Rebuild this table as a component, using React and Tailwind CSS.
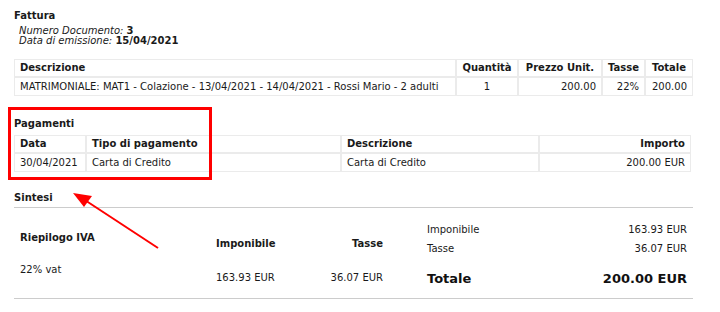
const righe = [
  { descr: 'MATRIMONIALE: MAT1 - Colazione - 13/04/2021 - 14/04/2021 - Rossi Mario - 2 adulti', qta: '1', prezzo: '200.00', tasse: '22%', totale: '200.00' },
];

const pagamenti = [
  { data: '30/04/2021', tipo: 'Carta di Credito', descr: 'Carta di Credito', importo: '200.00 EUR' },
];

const th = 'border border-[#ebebeb] px-[5px] py-[2px] font-bold leading-[12px]';
const td = 'border border-[#ebebeb] px-[5px] pt-[3px] pb-[2px] leading-[12px]';

function Freccia() {
  return (
    <svg className="absolute left-0 top-0 pointer-events-none" width="720" height="312">
      <line x1="158" y1="248" x2="84" y2="199.5" stroke="#f00" strokeWidth="2" />
      <polygon points="73,193 92,196 84,207" fill="#f00" />
    </svg>
  );
}

export default function App() {
  return (
    <div className="relative w-[720px] h-[312px] bg-white text-[#1a1a1a] text-[10px] font-['DejaVu_Sans',sans-serif] overflow-hidden">
      <div className="pl-[14px] pr-[27px] pt-[10px]">
        <div className="font-bold leading-[12px]">Fattura</div>
        <div className="pl-[5px] mt-[4px] leading-[10px]">
          <div><span className="italic">Numero Documento:</span> <b>3</b></div>
          <div><span className="italic">Data di emissione:</span> <b>15/04/2021</b></div>
        </div>

        <table className="mt-[13px] w-[679px] border-separate border-spacing-0">
          <thead>
            <tr>
              <th className={`${th} text-left`}>Descrizione</th>
              <th className={`${th} w-[62px] text-center`}>Quantità</th>
              <th className={`${th} w-[84px] text-center`}>Prezzo Unit.</th>
              <th className={`${th} w-[43px] text-center`}>Tasse</th>
              <th className={`${th} w-[48px] text-center`}>Totale</th>
            </tr>
          </thead>
          <tbody>
            {righe.map((r, i) => (
              <tr key={i}>
                <td className={td}>{r.descr}</td>
                <td className={`${td} text-center`}>{r.qta}</td>
                <td className={`${td} text-right`}>{r.prezzo}</td>
                <td className={`${td} text-right`}>{r.tasse}</td>
                <td className={`${td} text-right`}>{r.totale}</td>
              </tr>
            ))}
          </tbody>
        </table>

        <div className="mt-[22px] font-bold leading-[12px]">Pagamenti</div>
        <table className="mt-[5px] w-[677px] border-separate border-spacing-0">
          <thead>
            <tr>
              <th className={`${th} w-[72px] text-left`}>Data</th>
              <th className={`${th} w-[255px] text-left`}>Tipo di pagamento</th>
              <th className={`${th} w-[198px] text-left`}>Descrizione</th>
              <th className={`${th} text-right`}>Importo</th>
            </tr>
          </thead>
          <tbody>
            {pagamenti.map((p, i) => (
              <tr key={i}>
                <td className={td}>{p.data}</td>
                <td className={td}>{p.tipo}</td>
                <td className={td}>{p.descr}</td>
                <td className={`${td} text-right`}>{p.importo}</td>
              </tr>
            ))}
          </tbody>
        </table>

        <div className="mt-[20px] font-bold leading-[12px] pb-[3px] border-b border-[#cccccc]">Sintesi</div>

        <div className="flex h-[91px] border-b border-[#cccccc]">
          <div className="grid grid-cols-[202px_100px_67px] grid-rows-[53px_38px] w-[376px]">
            <div className="pl-[6px] pt-[24px] font-bold leading-[12px]">Riepilogo IVA</div>
            <div className="pt-[30px] font-bold leading-[12px]">Imponibile</div>
            <div className="pt-[30px] font-bold leading-[12px] text-right">Tasse</div>
            <div className="pl-[6px] pt-[3px] leading-[12px]">22% vat</div>
            <div className="pt-[11px] leading-[12px]">163.93 EUR</div>
            <div className="pt-[11px] leading-[12px] text-right">36.07 EUR</div>
          </div>
          <div className="ml-[37px] w-[260px] pt-[16px] flex flex-col">
            <div className="flex justify-between leading-[12px]">
              <span>Imponibile</span>
              <span>163.93 EUR</span>
            </div>
            <div className="flex justify-between leading-[12px] mt-[7px]">
              <span>Tasse</span>
              <span>36.07 EUR</span>
            </div>
            <div className="flex justify-between leading-[16px] mt-[16px] text-[13px] font-bold text-[#111]">
              <span>Totale</span>
              <span>200.00 EUR</span>
            </div>
          </div>
        </div>
      </div>

      <div className="absolute left-[8px] top-[107px] w-[204px] h-[73px] border-[3px] border-[#f00]" />
      <Freccia />
    </div>
  );
}
